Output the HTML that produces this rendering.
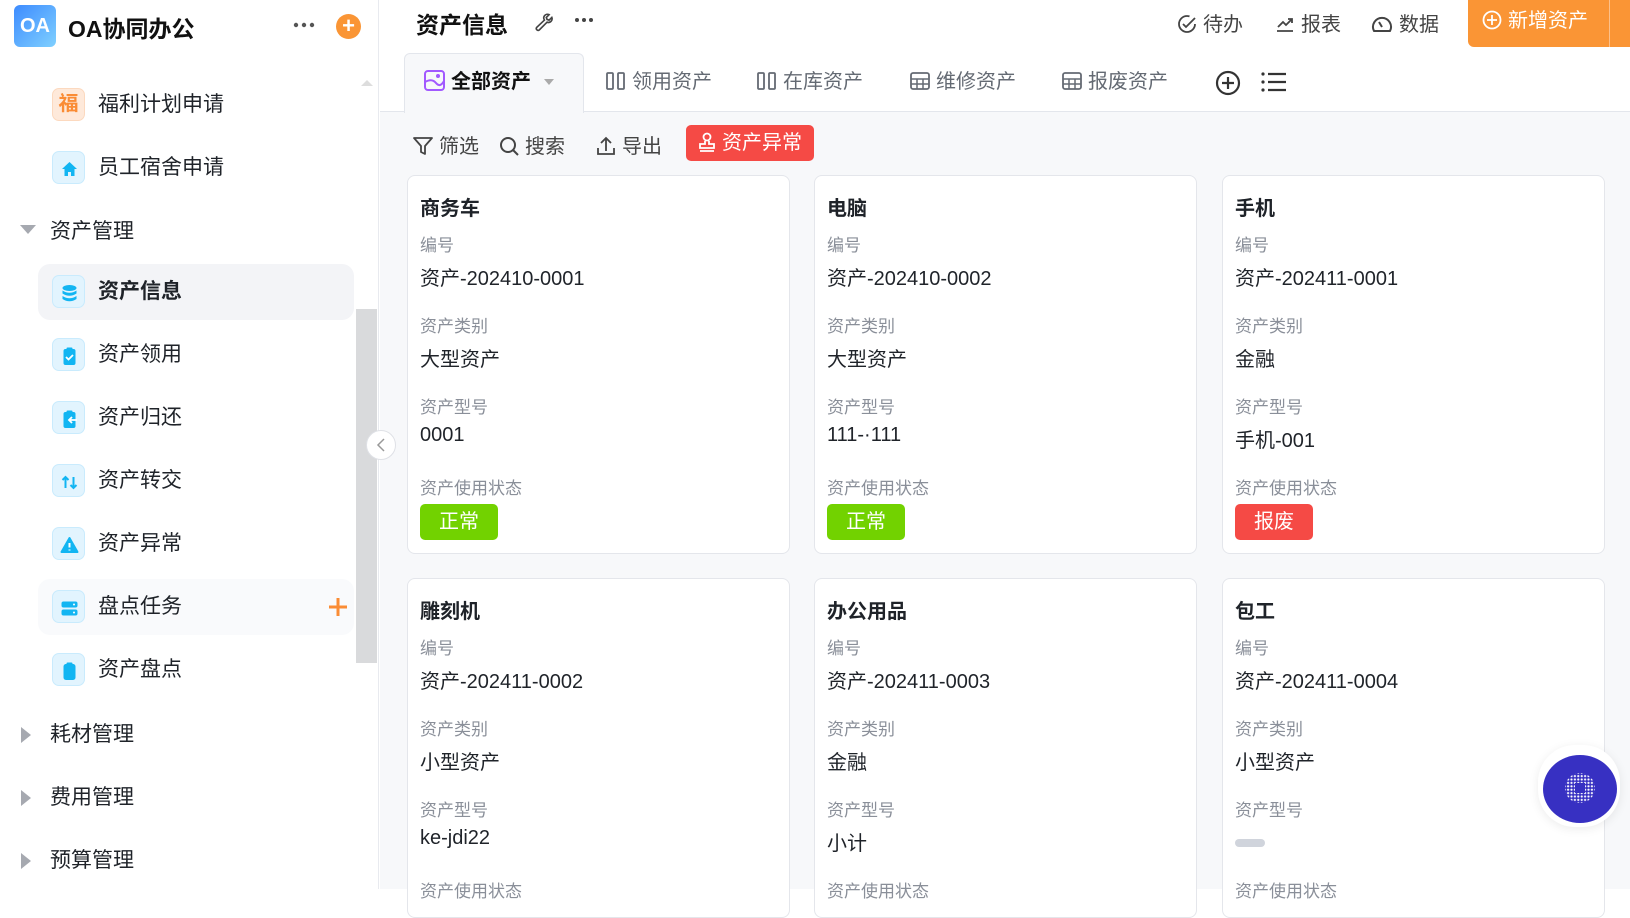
<!DOCTYPE html>
<html><head><meta charset="utf-8"><style>
*{box-sizing:border-box;margin:0;padding:0}
body{width:1630px;height:889px;overflow:hidden;background:#fff;font-family:"Liberation Sans","Noto Sans CJK SC",sans-serif;color:#1f2329;position:relative}
.a{position:absolute}
.side{left:0;top:0;width:379px;height:889px;background:#fff;border-right:1px solid #e8eaef}
.item{position:absolute;left:38px;width:316px;height:56px;border-radius:12px;font-size:21px;line-height:56px}
.ic{position:absolute;left:14px;top:11px;width:33px;height:33px;border-radius:7px;background:#e2f4fe;border:1px solid #c9ebfd}
.item span.t{position:absolute;left:60px}
.grp{position:absolute;left:50px;font-size:21px;line-height:30px}
.tri{position:absolute;left:-30px;top:8px;width:0;height:0}
.main{left:380px;top:0;width:1250px;height:889px;background:#f7f8fa}
.card{position:absolute;width:383px;background:#fff;border:1px solid #e4e6eb;border-radius:8px;padding:0 12px}
.card h3{position:absolute;left:12px;top:16px;font-size:20px;font-weight:bold}
.l{position:absolute;left:12px;font-size:17px;color:#8a8f99}
.v{position:absolute;left:12px;font-size:20px;color:#1f2329}
.tag{position:absolute;left:12px;width:78px;height:36px;border-radius:5px;color:#fff;font-size:20px;text-align:center;line-height:36px}
.tab{position:absolute;top:53px;height:59px;line-height:59px;font-size:20px;color:#646a73}
.tab svg,.tb svg,.hd svg{vertical-align:-3px;margin-right:6px}
.tb{position:absolute;top:130px;font-size:20px;color:#444}
.hd{position:absolute;top:8px;font-size:20px;color:#444}
</style></head><body>
<div class="a side">
 <div class="a" style="left:14px;top:5px;width:42px;height:42px;border-radius:6px;background:linear-gradient(135deg,#3d8bff,#7fd0ff);color:#fff;font-weight:bold;font-size:20px;line-height:42px;text-align:center">OA</div>
 <div class="a" style="left:68px;top:10px;font-size:23px;font-weight:bold;color:#111">OA协同办公</div>
 <svg class="a" style="left:293px;top:22px" width="22" height="6"><circle cx="3" cy="3" r="2.2" fill="#555"/><circle cx="11" cy="3" r="2.2" fill="#555"/><circle cx="19" cy="3" r="2.2" fill="#555"/></svg>
 <div class="a" style="left:336px;top:14px;width:25px;height:25px;border-radius:50%;background:#fa9535;color:#fff;text-align:center;line-height:24px;font-size:22px;font-weight:bold">+</div>
 <div class="a" style="left:361px;top:80px;width:0;height:0;border-left:6px solid transparent;border-right:6px solid transparent;border-bottom:6px solid #ddd"></div>
 <div class="item" style="top:77px"><div class="ic" style="background:#fee9da;border-color:#fcd9bf;color:#fa8c35;font-size:20px;line-height:31px;text-align:center;font-weight:bold">福</div><span class="t">福利计划申请</span></div>
 <div class="item" style="top:140px"><div class="ic"><svg width="33" height="33"><path d="M9 16 L16.5 9 L24 16 H21.5 V23 H18 V19 H15 V23 H11.5 V16Z" fill="#12b5f2"/></svg></div><span class="t">员工宿舍申请</span></div>
 <div class="grp" style="top:217px"><div class="tri" style="border-left:8px solid transparent;border-right:8px solid transparent;border-top:9px solid #a6a9b0"></div>资产管理</div>
 <div class="item" style="top:264px;background:#f3f4f7"><div class="ic"><svg width="33" height="33"><ellipse cx="16.5" cy="11" rx="7" ry="3" fill="#12b5f2"/><path d="M9.5 13.5 Q16.5 18 23.5 13.5 V16.5 Q16.5 21 9.5 16.5Z M9.5 19 Q16.5 23.5 23.5 19 V22 Q16.5 26.5 9.5 22Z" fill="#12b5f2"/></svg></div><span class="t" style="font-weight:bold">资产信息</span></div>
 <div class="item" style="top:327px"><div class="ic"><svg width="33" height="33"><rect x="10.5" y="9" width="12" height="16" rx="2" fill="#12b5f2"/><rect x="13.5" y="7.5" width="6" height="3" rx="1" fill="#12b5f2"/><path d="M13 17 L15.5 19.5 L20 15" stroke="#fff" stroke-width="1.8" fill="none"/></svg></div><span class="t">资产领用</span></div>
 <div class="item" style="top:390px"><div class="ic"><svg width="33" height="33"><rect x="10.5" y="9" width="12" height="16" rx="2" fill="#12b5f2"/><rect x="13.5" y="7.5" width="6" height="3" rx="1" fill="#12b5f2"/><path d="M24 17 H16 M19 14 L16 17 L19 20" stroke="#fff" stroke-width="1.8" fill="none"/></svg></div><span class="t">资产归还</span></div>
 <div class="item" style="top:453px"><div class="ic"><svg width="33" height="33"><path d="M12.5 22 V11 M9.5 14 L12.5 11 L15.5 14 M20.5 11 V22 M17.5 19 L20.5 22 L23.5 19" stroke="#12b5f2" stroke-width="2" fill="none"/></svg></div><span class="t">资产转交</span></div>
 <div class="item" style="top:516px"><div class="ic"><svg width="33" height="33"><path d="M16.5 9 L24.5 23 H8.5Z" fill="#12b5f2" stroke="#12b5f2" stroke-linejoin="round" stroke-width="2"/><path d="M16.5 14 V18.5 M16.5 20.5 V21.5" stroke="#fff" stroke-width="2"/></svg></div><span class="t">资产异常</span></div>
 <div class="item" style="top:579px;background:#f9fafc"><div class="ic"><svg width="33" height="33"><rect x="8.5" y="9.5" width="16" height="6" rx="2" fill="#12b5f2"/><rect x="8.5" y="17.5" width="16" height="6" rx="2" fill="#12b5f2"/><circle cx="21" cy="12.5" r="1" fill="#fff"/><circle cx="21" cy="20.5" r="1" fill="#fff"/></svg></div><span class="t">盘点任务</span><svg class="a" style="left:290px;top:18px" width="20" height="20"><path d="M10 1V19M1 10H19" stroke="#fa8c35" stroke-width="3"/></svg></div>
 <div class="item" style="top:642px"><div class="ic"><svg width="33" height="33"><rect x="10.5" y="9" width="12" height="16" rx="2.5" fill="#12b5f2"/><rect x="13.5" y="7.5" width="6" height="3" rx="1" fill="#12b5f2"/></svg></div><span class="t">资产盘点</span></div>
 <div class="grp" style="top:720px"><div class="tri" style="border-top:8px solid transparent;border-bottom:8px solid transparent;border-left:10px solid #a6a9b0;left:-29px;top:7px"></div>耗材管理</div>
 <div class="grp" style="top:783px"><div class="tri" style="border-top:8px solid transparent;border-bottom:8px solid transparent;border-left:10px solid #a6a9b0;left:-29px;top:7px"></div>费用管理</div>
 <div class="grp" style="top:846px"><div class="tri" style="border-top:8px solid transparent;border-bottom:8px solid transparent;border-left:10px solid #a6a9b0;left:-29px;top:7px"></div>预算管理</div>
 <div class="a" style="left:356px;top:309px;width:21px;height:354px;background:#d9dadc"></div>
 <div class="a" style="left:366px;top:430px;width:30px;height:30px;border-radius:50%;background:#fff;border:1px solid #dfe1e6;z-index:3"><svg class="a" style="left:9px;top:7px" width="10" height="14"><path d="M8 1L2 7L8 13" stroke="#999" stroke-width="1.5" fill="none"/></svg></div>
</div>
<div class="a main">
 <div class="a" style="left:0;top:0;width:1250px;height:112px;background:#fff;border-bottom:1px solid #e3e6ec"></div>
 <div class="a" style="left:36px;top:6px;font-size:23px;font-weight:bold;color:#111">资产信息</div>
 <svg class="a" style="left:151px;top:10px" width="22" height="22" viewBox="0 0 24 24"><path d="M14.7 6.3a4 4 0 0 1 5-1.2l-3 3 .8 2.2 2.2.8 3-3a4 4 0 0 1-5.2 5.2L9 21.8a2 2 0 0 1-2.8-2.8L14.7 11a4 4 0 0 1 0-4.7z" fill="none" stroke="#444" stroke-width="1.8"/></svg>
 <svg class="a" style="left:194px;top:17px" width="20" height="6"><circle cx="3" cy="3" r="2" fill="#444"/><circle cx="10" cy="3" r="2" fill="#444"/><circle cx="17" cy="3" r="2" fill="#444"/></svg>
 <div class="hd" style="left:797px"><svg width="20" height="20"><circle cx="10" cy="10" r="8" fill="none" stroke="#444" stroke-width="1.8" stroke-dasharray="40 10"/><path d="M6 10L9 13L18 4" stroke="#444" stroke-width="1.8" fill="none"/></svg>待办</div>
 <div class="hd" style="left:895px"><svg width="20" height="20"><path d="M2 17H18M3 13L8 8L11 11L17 5M13 5H17V9" stroke="#444" stroke-width="1.8" fill="none"/></svg>报表</div>
 <div class="hd" style="left:991px"><svg width="22" height="20"><path d="M3 17A9 9 0 1 1 19 17Z" fill="none" stroke="#444" stroke-width="2" stroke-linejoin="round"/><path d="M11 13L8 8" stroke="#444" stroke-width="2"/></svg>数据</div>
 <div class="a" style="left:1088px;top:0;width:162px;height:47px;background:#fa9535;border-radius:0 0 0 6px;color:#fff;font-size:20px;line-height:42px;padding-left:14px"><svg style="vertical-align:-3px;margin-right:6px" width="20" height="20"><circle cx="10" cy="10" r="8.5" fill="none" stroke="#fff" stroke-width="1.8"/><path d="M10 5V15M5 10H15" stroke="#fff" stroke-width="1.8"/></svg>新增资产</div>
 <div class="a" style="left:1229px;top:0;width:1px;height:47px;background:#fcc08a"></div>
 <div class="a" style="left:24px;top:53px;width:180px;height:60px;background:#f7f8fa;border:1px solid #e3e6ec;border-bottom:none;border-radius:6px 6px 0 0"></div>
 <div class="tab" style="left:44px;color:#111;font-weight:bold"><svg width="21" height="21"><rect x="1" y="1" width="19" height="19" rx="3" fill="none" stroke="#a259ff" stroke-width="2"/><path d="M1 12 Q8 8 12 13 T20 11" stroke="#a259ff" stroke-width="2" fill="none"/><circle cx="14" cy="6" r="2" fill="#a259ff"/></svg>全部资产 <svg width="12" height="8" style="margin-left:6px;vertical-align:2px"><path d="M1 1H11L6 7Z" fill="#aaa"/></svg></div>
 <div class="tab" style="left:226px"><svg width="20" height="20"><rect x="1" y="2" width="6" height="16" rx="1" fill="none" stroke="#646a73" stroke-width="1.8"/><rect x="12" y="2" width="6" height="16" rx="1" fill="none" stroke="#646a73" stroke-width="1.8"/></svg>领用资产</div>
 <div class="tab" style="left:377px"><svg width="20" height="20"><rect x="1" y="2" width="6" height="16" rx="1" fill="none" stroke="#646a73" stroke-width="1.8"/><rect x="12" y="2" width="6" height="16" rx="1" fill="none" stroke="#646a73" stroke-width="1.8"/></svg>在库资产</div>
 <div class="tab" style="left:530px"><svg width="20" height="20"><rect x="1" y="2" width="18" height="16" rx="2" fill="none" stroke="#646a73" stroke-width="1.8"/><path d="M1 8H19M1 13H19M7 8V18M13 8V18" stroke="#646a73" stroke-width="1.5"/></svg>维修资产</div>
 <div class="tab" style="left:682px"><svg width="20" height="20"><rect x="1" y="2" width="18" height="16" rx="2" fill="none" stroke="#646a73" stroke-width="1.8"/><path d="M1 8H19M1 13H19M7 8V18M13 8V18" stroke="#646a73" stroke-width="1.5"/></svg>报废资产</div>
 <svg class="a" style="left:835px;top:70px" width="26" height="26"><circle cx="13" cy="13" r="11" fill="none" stroke="#333" stroke-width="2.2"/><path d="M13 7V19M7 13H19" stroke="#333" stroke-width="2.2"/></svg>
 <svg class="a" style="left:881px;top:72px" width="26" height="20"><circle cx="2" cy="2" r="1.6" fill="#333"/><circle cx="2" cy="10" r="1.6" fill="#333"/><circle cx="2" cy="18" r="1.6" fill="#333"/><path d="M7 2H25M7 10H25M7 18H25" stroke="#333" stroke-width="2.2"/></svg>
 <div class="tb" style="left:33px"><svg width="20" height="20"><path d="M1 2H19L12 10V18L8 16V10Z" fill="none" stroke="#444" stroke-width="1.8" stroke-linejoin="round"/></svg>筛选</div>
 <div class="tb" style="left:119px"><svg width="20" height="20"><circle cx="9" cy="9" r="7" fill="none" stroke="#444" stroke-width="2"/><path d="M14 14L19 19" stroke="#444" stroke-width="2"/></svg>搜索</div>
 <div class="tb" style="left:216px"><svg width="20" height="20"><path d="M10 15V2M5 7L10 2L15 7M2 12V18H18V12" fill="none" stroke="#444" stroke-width="1.8"/></svg>导出</div>
 <div class="a" style="left:306px;top:125px;width:128px;height:36px;background:#f54a45;border-radius:5px;color:#fff;font-size:20px;line-height:36px;padding-left:12px"><svg style="vertical-align:-3px;margin-right:6px" width="18" height="20"><circle cx="9" cy="5" r="3.5" fill="none" stroke="#fff" stroke-width="1.8"/><path d="M7 9V12H2V16H16V12H11V9M2 19H16" fill="none" stroke="#fff" stroke-width="1.8"/></svg>资产异常</div>

 <div class="card" style="left:27px;top:175px;height:379px"><h3>商务车</h3><div class="l" style="top:55px">编号</div><div class="v" style="top:86px">资产-202410-0001</div><div class="l" style="top:136px">资产类别</div><div class="v" style="top:167px">大型资产</div><div class="l" style="top:217px">资产型号</div><div class="v" style="top:248px">0001</div><div class="l" style="top:298px">资产使用状态</div><div class="tag" style="top:328px;background:#72d200">正常</div></div>
 <div class="card" style="left:434px;top:175px;height:379px"><h3>电脑</h3><div class="l" style="top:55px">编号</div><div class="v" style="top:86px">资产-202410-0002</div><div class="l" style="top:136px">资产类别</div><div class="v" style="top:167px">大型资产</div><div class="l" style="top:217px">资产型号</div><div class="v" style="top:248px">111-·111</div><div class="l" style="top:298px">资产使用状态</div><div class="tag" style="top:328px;background:#72d200">正常</div></div>
 <div class="card" style="left:842px;top:175px;height:379px"><h3>手机</h3><div class="l" style="top:55px">编号</div><div class="v" style="top:86px">资产-202411-0001</div><div class="l" style="top:136px">资产类别</div><div class="v" style="top:167px">金融</div><div class="l" style="top:217px">资产型号</div><div class="v" style="top:248px">手机-001</div><div class="l" style="top:298px">资产使用状态</div><div class="tag" style="top:328px;background:#f54a45">报废</div></div>

 <div class="card" style="left:27px;top:578px;height:340px"><h3>雕刻机</h3><div class="l" style="top:55px">编号</div><div class="v" style="top:86px">资产-202411-0002</div><div class="l" style="top:136px">资产类别</div><div class="v" style="top:167px">小型资产</div><div class="l" style="top:217px">资产型号</div><div class="v" style="top:248px">ke-jdi22</div><div class="l" style="top:298px">资产使用状态</div></div>
 <div class="card" style="left:434px;top:578px;height:340px"><h3>办公用品</h3><div class="l" style="top:55px">编号</div><div class="v" style="top:86px">资产-202411-0003</div><div class="l" style="top:136px">资产类别</div><div class="v" style="top:167px">金融</div><div class="l" style="top:217px">资产型号</div><div class="v" style="top:248px">小计</div><div class="l" style="top:298px">资产使用状态</div></div>
 <div class="card" style="left:842px;top:578px;height:340px"><h3>包工</h3><div class="l" style="top:55px">编号</div><div class="v" style="top:86px">资产-202411-0004</div><div class="l" style="top:136px">资产类别</div><div class="v" style="top:167px">小型资产</div><div class="l" style="top:217px">资产型号</div><div class="a" style="left:12px;top:260px;width:30px;height:8px;border-radius:4px;background:#d0d4dc"></div><div class="l" style="top:298px">资产使用状态</div></div>
 <div class="a" style="left:1158px;top:745px;width:82px;height:82px;border-radius:45%;background:#fff;box-shadow:0 2px 10px rgba(0,0,0,.08)"></div>
 <div class="a" style="left:1163px;top:755px;width:74px;height:68px;border-radius:50%;background:#3730c2"></div>
 <svg class="a" style="left:1183px;top:771px" width="34" height="34">
  <defs><pattern id="d" width="3.4" height="3.4" patternUnits="userSpaceOnUse"><circle cx="1.7" cy="1.7" r="1.1" fill="#fff"/></pattern></defs>
  <circle cx="17" cy="17" r="15" fill="url(#d)"/><rect x="12" y="12" width="10" height="10" fill="#3730c2"/>
 </svg>
</div>
</body></html>
